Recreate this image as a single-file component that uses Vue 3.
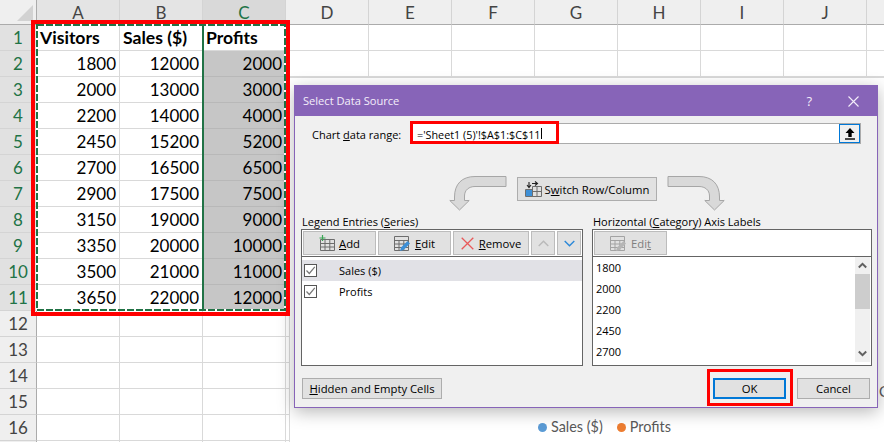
<template>
  <div class="page">
    <!-- worksheet -->
    <div class="sheet">
      <div class="corner">
        <svg width="18" height="18" viewBox="0 0 18 18"><path d="M17 1V17H1Z" fill="#d2d2d2" /></svg>
      </div>
      <div
        v-for="(col, i) in columns"
        :key="i"
        class="col-head"
        :class="{ picked: i < 2, active: i === 2 }"
      >{{ col }}</div>
      <template v-for="r in 17" :key="r">
        <div class="row-head" :class="{ picked: r <= 11 }">{{ r < 17 ? r : '' }}</div>
        <div
          v-for="(col, i) in columns"
          :key="i"
          class="cell"
          :class="{ title: r === 1, shaded: i === 2 && r > 1 && r <= 11 }"
        >{{ cellText(r, i) }}</div>
      </template>
    </div>

    <div class="selection"></div>
    <svg class="ants" width="250" height="287" viewBox="0 0 250 287">
      <rect x="1" y="1" width="248" height="285" fill="none" stroke="#fff" stroke-width="2" />
      <rect x="1" y="1" width="248" height="285" fill="none" stroke="#217346" stroke-width="2" stroke-dasharray="7 2" />
    </svg>

    <!-- chart behind the dialog -->
    <div class="chart">
      <div class="legend">
        <span class="dot blue"></span><span>Sales ($)</span>
        <span class="dot orange"></span><span>Profits</span>
      </div>
      <span class="axis-stub">C</span>
    </div>

    <!-- dialog -->
    <div class="dialog">
      <div class="titlebar">
        <span class="title-text">Select Data Source</span>
        <span class="help">?</span>
        <svg class="close" width="11" height="11" viewBox="0 0 11 11">
          <path d="M.5.5l10 10M10.5.5l-10 10" stroke="#f4eefa" stroke-width="1.1" fill="none" />
        </svg>
      </div>

      <div class="range-row">
        <label class="range-label">Chart <u>d</u>ata range:</label>
        <div class="range-input">
          <span class="range-text">='Sheet1 (5)'!$A$1:$C$11</span><span class="caret"></span>
          <button class="collapse">
            <svg width="10" height="12" viewBox="0 0 10 12">
              <path d="M5 0L9.5 5H6.7V9H3.3V5H.5Z" fill="#000" />
              <path d="M0 11H10" stroke="#000" stroke-width="1.4" />
            </svg>
          </button>
        </div>
      </div>

      <div class="switch-row">
        <svg class="bend" width="58" height="35" viewBox="0 0 58 35">
          <path d="M57 .5H26C13 .5 5.500 8 5.500 21V24.500H.8L10.500 34 20.200 24.500H15.500V20C15.500 14 20 10.500 26 10.500H57Z" fill="#d9d9d9" stroke="#a6a6a6" />
        </svg>
        <button class="btn switch">
          <svg width="17" height="17" viewBox="0 0 17 17">
            <path d="M1 8.500h6v7H1z" fill="#3d8fd6" />
            <path d="M7.500 5.500h9v10h-9zM7.500 10.500h9M12 5.500v10M.5 8.500h7v7h-7z" fill="none" stroke="#6d6d6d" />
            <path d="M4 1v5M2 4l2 2.500L6 4M7 2.500h5M10 .5l2.500 2-2.500 2" fill="none" stroke="#222" stroke-width="1.100" />
          </svg>
          <span>S<u>w</u>itch Row/Column</span>
        </button>
        <svg class="bend flip" width="58" height="35" viewBox="0 0 58 35">
          <path d="M57 .5H26C13 .5 5.500 8 5.500 21V24.500H.8L10.500 34 20.200 24.500H15.500V20C15.500 14 20 10.500 26 10.500H57Z" fill="#d9d9d9" stroke="#a6a6a6" />
        </svg>
      </div>

      <div class="panels">
        <div class="panel-col left">
          <div class="panel-title">Legend Entries (<u>S</u>eries)</div>
          <div class="panel">
            <div class="toolbar">
              <button class="btn tool wide">
                <svg width="16" height="16" viewBox="0 0 16 16">
                  <path d="M1.500 4.500h14v11h-14zM1.500 8.500h14M1.500 12h14M6 4.500v11M10.800 4.500v11" fill="none" stroke="#6d6d6d" />
                  <path d="M3.500 0v6M.5 3h6" stroke="#3aa655" stroke-width="1.200" fill="none" />
                </svg>
                <span><u>A</u>dd</span>
              </button>
              <button class="btn tool wide">
                <svg width="17" height="17" viewBox="0 0 17 17">
                  <path d="M.5 1.500h14v14H.5zM.5 5.500h14M.5 9h14M.5 12.500h14M5 5.500v10M9.800 5.500v10" fill="none" stroke="#6d6d6d" />
                  <path d="M6 16l1-3.500L13.500 6 16 8.500 9.500 15Z" fill="#3d8fd6" />
                </svg>
                <span><u>E</u>dit</span>
              </button>
              <button class="btn tool remove">
                <svg width="13" height="13" viewBox="0 0 13 13">
                  <path d="M.7.7l11.600 11.600M12.300.7L.7 12.300" stroke="#e8595a" stroke-width="1.300" fill="none" />
                </svg>
                <span><u>R</u>emove</span>
              </button>
              <button class="btn tool arrow">
                <svg width="11" height="7" viewBox="0 0 11 7"><path d="M.7 6L5.500 1.200 10.300 6" fill="none" stroke="#b9b9b9" stroke-width="1.400" /></svg>
              </button>
              <button class="btn tool arrow">
                <svg width="11" height="7" viewBox="0 0 11 7"><path d="M.7 1L5.500 5.800 10.300 1" fill="none" stroke="#2b88d8" stroke-width="1.400" /></svg>
              </button>
            </div>
            <div class="series-list">
              <div
                v-for="(s, i) in series"
                :key="s"
                class="series-row"
                :class="{ current: i === 0 }"
              >
                <span class="check">
                  <svg width="11" height="11" viewBox="0 0 11 11"><path d="M1.500 5.500L4.300 8.500 9.800 1.800" fill="none" stroke="#777" stroke-width="1.200" /></svg>
                </span>
                <span>{{ s }}</span>
              </div>
            </div>
          </div>
        </div>

        <div class="panel-col right">
          <div class="panel-title">Horizontal (<u>C</u>ategory) Axis Labels</div>
          <div class="panel">
            <div class="toolbar">
              <button class="btn tool wide disabled">
                <svg width="17" height="17" viewBox="0 0 17 17">
                  <path d="M.5 1.500h14v14H.5zM.5 5.500h14M.5 9h14M.5 12.500h14M5 5.500v10M9.800 5.500v10" fill="none" stroke="#a3a3a3" />
                  <path d="M6 16l1-3.500L13.500 6 16 8.500 9.500 15Z" fill="#b5b5b5" />
                </svg>
                <span>Edi<u>t</u></span>
              </button>
            </div>
            <div class="axis-body">
              <div class="axis-list">
                <div v-for="n in axisLabels" :key="n" class="axis-row">{{ n }}</div>
              </div>
              <div class="scrollbar">
                <span class="scroll-btn">
                  <svg width="9" height="7" viewBox="0 0 9 7"><path d="M.8 5.500L4.500 1.800 8.200 5.500" fill="none" stroke="#606060" stroke-width="2" /></svg>
                </span>
                <span class="thumb"></span>
                <span class="scroll-gap"></span>
                <span class="scroll-btn">
                  <svg width="9" height="7" viewBox="0 0 9 7"><path d="M.8 1.500L4.500 5.200 8.200 1.500" fill="none" stroke="#606060" stroke-width="2" /></svg>
                </span>
              </div>
            </div>
          </div>
        </div>
      </div>

      <div class="footer">
        <button class="btn hidden-cells"><span><u>H</u>idden and Empty Cells</span></button>
        <button class="btn action ok">OK</button>
        <button class="btn action">Cancel</button>
      </div>
    </div>

    <!-- red callouts drawn on the screenshot -->
    <div class="mark mark-table"></div>
    <div class="mark mark-range"></div>
    <div class="mark mark-ok"></div>
  </div>
</template>

<script setup>
const columns = ['A', 'B', 'C', 'D', 'E', 'F', 'G', 'H', 'I', 'J', '']

const table = [
  ['Visitors', 'Sales ($)', 'Profits'],
  [1800, 12000, 2000],
  [2000, 13000, 3000],
  [2200, 14000, 4000],
  [2450, 15200, 5200],
  [2700, 16500, 6500],
  [2900, 17500, 7500],
  [3150, 19000, 9000],
  [3350, 20000, 10000],
  [3500, 21000, 11000],
  [3650, 22000, 12000]
]

const series = ['Sales ($)', 'Profits']
const axisLabels = [1800, 2000, 2200, 2450, 2700]

const cellText = (row, col) => {
  const line = table[row - 1]
  return line && col < 3 ? line[col] : ''
}
</script>

<style scoped>
.page {
  position: relative;
  width: 884px;
  height: 442px;
  overflow: hidden;
  background: #fff;
  font-family: "Open Sans", "Noto Sans", sans-serif;
}

.sheet {
  display: grid;
  grid-template-columns: 37px repeat(11, 83px);
  grid-template-rows: 25px repeat(17, 26px);
  font-family: Lato, "Open Sans", sans-serif;
}

.corner,
.col-head,
.row-head,
.cell {
  box-sizing: border-box;
  display: flex;
  align-items: center;
}

.corner {
  justify-content: flex-end;
  background: #efefef;
  border-right: 1px solid #ababab;
  border-bottom: 1px solid #ababab;
  padding: 4px 2px 2px 0;
}

.col-head {
  justify-content: center;
  background: #efefef;
  border-right: 1px solid #d4d4d4;
  border-bottom: 1px solid #ababab;
  color: #444;
  font-size: 17px;
}

.col-head.picked {
  background: #e4e4e4;
}

.col-head.active {
  background: #d9d9d9;
  color: #217346;
}

.row-head {
  justify-content: center;
  background: #efefef;
  border-right: 1px solid #ababab;
  border-bottom: 1px solid #d4d4d4;
  color: #444;
  font-size: 17px;
}

.row-head.picked {
  background: #e1e1e1;
  color: #217346;
}

.cell {
  justify-content: flex-end;
  padding: 0 3px;
  border-right: 1px solid #d9d9d9;
  border-bottom: 1px solid #d9d9d9;
  color: #000;
  font-size: 17px;
}

.cell.title {
  justify-content: flex-start;
  font-size: 17.6px;
  font-weight: 700;
}

.cell.shaded {
  background: #c6c6c6;
  border-color: #b8b8b8;
}

.selection {
  position: absolute;
  left: 202px;
  top: 24px;
  width: 84px;
  height: 287px;
  box-sizing: border-box;
  border: 2px solid #217346;
}

.ants {
  position: absolute;
  left: 36px;
  top: 24px;
}

.chart {
  position: absolute;
  left: 289px;
  top: 77px;
  right: 0;
  bottom: 0;
  background: #fff;
  border-top: 1px solid #d9d9d9;
  border-left: 1px solid #d9d9d9;
  color: #595959;
  font-family: Lato, sans-serif;
  font-size: 14.4px;
}

.legend {
  position: absolute;
  left: 248px;
  top: 340px;
  display: flex;
  align-items: center;
  gap: 4px;
  line-height: 18px;
}

.dot {
  width: 9px;
  height: 9px;
  border-radius: 50%;
}

.dot.blue {
  background: #5b9bd5;
}

.dot.orange {
  margin-left: 10px;
  background: #ed7d31;
}

.axis-stub {
  position: absolute;
  left: 589px;
  top: 305px;
}

.dialog {
  position: absolute;
  left: 294px;
  top: 85px;
  width: 584px;
  height: 323px;
  box-sizing: border-box;
  border: 1px solid #8764b8;
  background: #f0f0f0;
  box-shadow: 0 4px 16px rgba(0, 0, 0, 0.28);
  color: #000;
  font-size: 11px;
}

.titlebar {
  display: flex;
  align-items: center;
  box-sizing: border-box;
  height: 30px;
  padding: 0 18px 0 8px;
  background: #8764b8;
  color: #f4eefa;
}

.title-text {
  flex: 1;
  margin-bottom: 2px;
  font-size: 11.1px;
}

.help {
  margin-right: 36px;
  font-size: 13px;
}

.range-row {
  display: flex;
  align-items: center;
  margin-top: 7px;
  padding-left: 17px;
}

.range-label {
  width: 98px;
  padding-top: 1px;
}

.range-input {
  display: flex;
  align-items: center;
  box-sizing: border-box;
  width: 451px;
  height: 21px;
  padding-left: 6px;
  border: 1px solid #ababab;
  background: #fff;
}

.range-text {
  padding-top: 1px;
  font-size: 10.8px;
}

.caret {
  width: 1px;
  height: 11px;
  margin-left: 1px;
  background: #000;
}

.collapse {
  display: flex;
  align-items: center;
  justify-content: center;
  box-sizing: border-box;
  width: 21px;
  height: 19px;
  margin-left: auto;
  padding: 0;
  border: 1px solid #0078d7;
  background: #f0f0f0;
}

.switch-row {
  display: flex;
  align-items: flex-start;
  gap: 10px;
  height: 35px;
  margin-top: 32px;
  padding-left: 154px;
}

.bend.flip {
  transform: scaleX(-1);
}

.btn {
  display: flex;
  align-items: center;
  justify-content: center;
  box-sizing: border-box;
  padding: 0;
  border: 1px solid #adadad;
  background: #e1e1e1;
  color: #000;
  font: inherit;
}

.switch {
  gap: 3px;
  width: 140px;
  height: 24px;
  margin-top: 1px;
  font-size: 11.3px;
}

.panels {
  display: flex;
  gap: 9px;
  margin-top: 2px;
  padding-left: 6px;
}

.panel-col.left {
  width: 282px;
}

.panel-col.right {
  width: 280px;
}

.panel-title {
  height: 16px;
  padding-left: 1px;
  line-height: 18px;
}

.panel {
  box-sizing: border-box;
  height: 137px;
  border: 1px solid #646464;
  background: #fff;
}

.toolbar {
  display: flex;
  gap: 2px;
  box-sizing: border-box;
  height: 27px;
  padding: 1px;
  border-bottom: 1px solid #646464;
}

.tool {
  gap: 4px;
  height: 24px;
  background: #e1e1e1;
  border-color: #bcbcbc;
  font-size: 11.3px;
}

.tool.wide {
  width: 73px;
}

.tool.remove {
  gap: 5px;
  width: 76px;
}

.tool.arrow {
  width: 24px;
}

.tool.disabled {
  color: #7f7f7f;
}

.series-list {
  padding-top: 3px;
}

.series-row {
  display: flex;
  align-items: center;
  height: 21px;
}

.series-row.current {
  background: #e1e1e6;
}

.check {
  display: flex;
  align-items: center;
  justify-content: center;
  box-sizing: border-box;
  width: 13px;
  height: 13px;
  margin: 0 22px 0 2px;
  border: 1px solid #555;
  background: #fff;
}

.axis-body {
  display: flex;
  height: 108px;
}

.axis-list {
  flex: 1;
  padding: 1px 0 0 3px;
}

.axis-row {
  height: 21px;
  line-height: 20px;
}

.scrollbar {
  display: flex;
  flex-direction: column;
  width: 15px;
  height: 105px;
  margin-right: 1px;
  background: #f0f0f0;
}

.scroll-btn {
  display: flex;
  align-items: center;
  justify-content: center;
  height: 17px;
}

.thumb {
  height: 35px;
  background: #cdcdcd;
}

.scroll-gap {
  flex: 1;
}

.footer {
  display: flex;
  gap: 11px;
  margin-top: 12px;
  padding: 0 7px;
  font-size: 11.3px;
}

.btn.hidden-cells {
  width: 140px;
  height: 21px;
  margin-right: auto;
}

.action {
  width: 73px;
  height: 21px;
}

.action.ok {
  border: 2px solid #0078d7;
}

.mark {
  position: absolute;
  box-sizing: border-box;
  border: 3px solid #f00;
}

.mark-table {
  left: 31px;
  top: 20px;
  width: 259px;
  height: 296px;
  border-width: 4px;
}

.mark-range {
  left: 410px;
  top: 121px;
  width: 149px;
  height: 23px;
}

.mark-ok {
  left: 707px;
  top: 369px;
  width: 86px;
  height: 37px;
}
</style>

<style>
html,
body {
  margin: 0;
  overflow: hidden;
}
</style>
